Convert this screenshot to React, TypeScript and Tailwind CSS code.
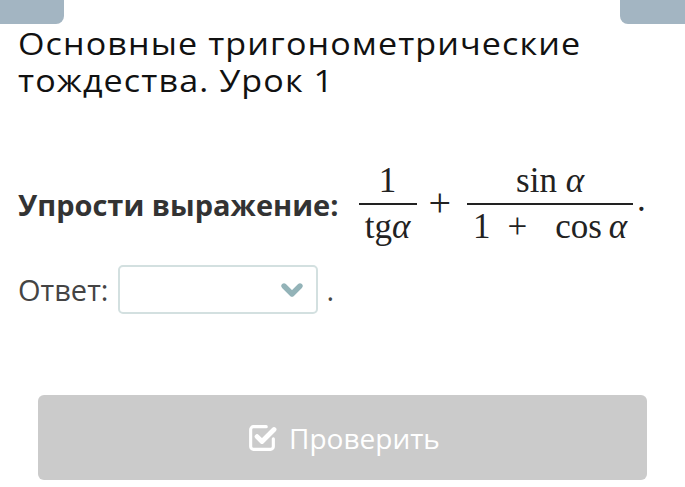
import { ChevronDown } from 'lucide-react'

function Frac({ num, den, width }: { num: React.ReactNode; den: React.ReactNode; width: string }) {
  return (
    <span className={`inline-flex flex-col items-center ${width}`}>
      <span className="leading-[40px] pb-[2px]">{num}</span>
      <span className="w-full h-[2px] bg-[#222]" />
      <span className="leading-[40px] pt-[2px] flex items-baseline">{den}</span>
    </span>
  )
}

function CheckIcon() {
  return (
    <svg width="34" height="34" viewBox="0 0 24 24" fill="none" stroke="white" strokeLinecap="round" strokeLinejoin="round">
      <path d="M20 12.5v5.5a2 2 0 0 1-2 2H6a2 2 0 0 1-2-2V6a2 2 0 0 1 2-2h9" strokeWidth="2.2" />
      <path d="M8.5 11l3.5 3.5L20.5 6" strokeWidth="3.4" />
    </svg>
  )
}

export default function App() {
  return (
    <div className="w-[685px] h-[487px] bg-white relative overflow-hidden font-['Open_Sans',sans-serif]">
      <div className="flex justify-between">
        <div className="w-[64px] h-[24px] bg-[#a3b5c2] rounded-br-[8px]" />
        <div className="w-[65px] h-[24px] bg-[#a3b5c2] rounded-bl-[8px]" />
      </div>

      <div className="px-[18px] pt-[1px]">
        <h1 className="text-[31px] leading-[37px] text-[#111] tracking-[1px] scale-x-[1.1] origin-left w-[560px]">
          Основные тригонометрические тождества. Урок 1
        </h1>
      </div>

      <div className="flex items-center px-[18px] mt-[61px] h-[88px]">
        <span className="text-[29px] font-bold text-[#333] mr-[20px] mt-[2px]">Упрости выражение:</span>
        <span className="flex items-center font-['Liberation_Serif',serif] text-[35px] text-[#222]">
          <Frac width="w-[58px]" num="1" den={<>tg<i>α</i></>} />
          <span className="ml-[12px] mr-[16px] mt-[-2px] text-[40px] font-light">+</span>
          <Frac
            width="w-[166px]"
            num={<>sin <i>α</i></>}
            den={
              <>
                <span className="mr-[17px]">1</span>
                <span className="mr-[28px]">+</span>
                <span className="mr-[7px]">cos</span>
                <i>α</i>
              </>
            }
          />
          <span className="ml-[4px] mt-[-8px]">.</span>
        </span>
      </div>

      <div className="flex items-center px-[18px] mt-[17px]">
        <span className="text-[29px] text-[#444]">Ответ:</span>
        <div className="ml-[10px] w-[200px] h-[49px] border-2 border-[#d3e0e0] rounded-[5px] flex items-center justify-end pr-[8px]">
          <ChevronDown size={32} strokeWidth={4} color="#93b3b8" />
        </div>
        <span className="ml-[8px] text-[29px] text-[#444]">.</span>
      </div>

      <div className="mx-[38px] mt-[81px] h-[85px] bg-[#cbcbcb] rounded-[6px] flex items-center justify-center gap-[10px]">
        <CheckIcon />
        <span className="text-white text-[28px]">Проверить</span>
      </div>
    </div>
  )
}
